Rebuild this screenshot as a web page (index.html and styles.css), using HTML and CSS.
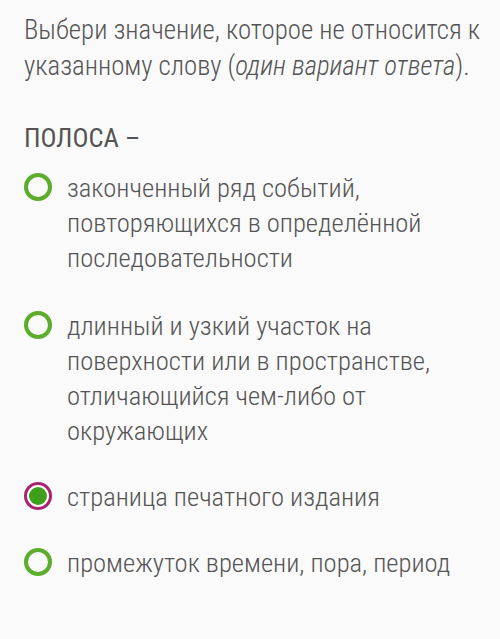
FILE: index.html
```html
<!DOCTYPE html>
<html lang="ru">
<head>
    <meta charset="UTF-8">
    <meta name="viewport" content="width=device-width, initial-scale=1.0">
    <title>Вопрос</title>
    <link rel="stylesheet" href="styles.css">
</head>
<body>
    <div class="question">
        <p class="task">Выбери значение, которое не относится к указанному слову (<em>один вариант ответа</em>).</p>
        <p class="word">ПОЛОСА –</p>

        <div class="answers">
            <label class="answer">
                <span class="radio"></span>
                <span class="text">законченный ряд событий, повторяющихся в определённой последовательности</span>
            </label>
            <label class="answer">
                <span class="radio"></span>
                <span class="text">длинный и узкий участок на поверхности или в пространстве, отличающийся чем-либо от окружающих</span>
            </label>
            <label class="answer checked">
                <span class="radio"></span>
                <span class="text">страница печатного издания</span>
            </label>
            <label class="answer">
                <span class="radio"></span>
                <span class="text">промежуток времени, пора, период</span>
            </label>
        </div>
    </div>
</body>
</html>
```

FILE: styles.css
```css
body {
    font-family: Roboto, "Noto Sans", sans-serif;
    font-weight: 300;
    font-stretch: 86%;
    margin: 0;
    padding: 0;
    background: #fafafa;
    color: #545454;
}

.question {
    padding: 12px 12px 20px 24px;
}

.task {
    font-size: 26.8px;
    line-height: 36px;
    margin: 0;
}

.task em {
    font-style: italic;
}

.word {
    font-size: 26.6px;
    line-height: 35px;
    margin: 36px 0 0 0;
    font-weight: 400;
}

.answers {
    display: flex;
    flex-direction: column;
    gap: 33px;
    margin-top: 15px;
}

.answer {
    display: flex;
    align-items: flex-start;
    gap: 15px;
    font-size: 26.6px;
    line-height: 35px;
}

.answer:nth-child(n+3) {
    margin-top: -2px;
}

.radio {
    flex: none;
    box-sizing: border-box;
    width: 28px;
    height: 28px;
    margin-top: 3px;
    border: 4px solid #5cad2c;
    border-radius: 50%;
    position: relative;
}

.answer.checked .radio {
    border: 3px solid #a8246f;
    background: #fff;
}

.answer.checked .radio::after {
    content: "";
    position: absolute;
    left: 2px;
    top: 2px;
    width: 18px;
    height: 18px;
    border-radius: 50%;
    background: #3d9f1b;
}
```
